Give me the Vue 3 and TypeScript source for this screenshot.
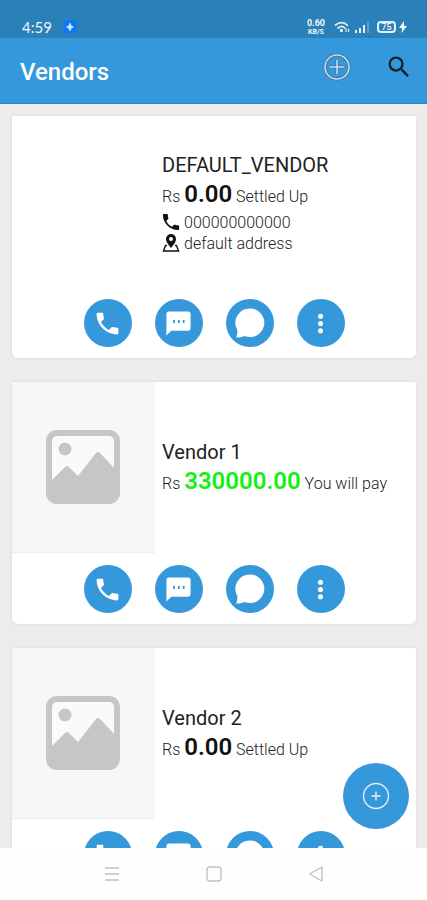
<script setup lang="ts">
interface Vendor {
  name: string
  amount: string
  status: string
  owed?: boolean
  phone?: string
  address?: string
  placeholder: boolean
}

const vendors: Vendor[] = [
  { name: 'DEFAULT_VENDOR', amount: '0.00', status: 'Settled Up', phone: '000000000000', address: 'default address', placeholder: false },
  { name: 'Vendor 1', amount: '330000.00', status: 'You will pay', owed: true, placeholder: true },
  { name: 'Vendor 2', amount: '0.00', status: 'Settled Up', placeholder: true },
]

const callPath =
  'M20 15.5c-1.25 0-2.45-.2-3.57-.57-.35-.11-.74-.03-1.02.24l-2.2 2.2c-2.83-1.44-5.15-3.75-6.59-6.59l2.2-2.21c.28-.26.36-.65.25-1C8.7 6.45 8.5 5.25 8.5 4c0-.55-.45-1-1-1H4c-.55 0-1 .45-1 1 0 9.39 7.61 17 17 17 .55 0 1-.45 1-1v-3.5c0-.55-.45-1-1-1z'
</script>

<template>
  <div class="screen">
    <div class="status">
      <span class="clock">4:59</span>
      <svg class="badge" viewBox="0 0 14 14" aria-hidden="true">
        <rect x="0.5" y="0.5" width="13" height="13" rx="3.5" fill="#0a78fb" />
        <path d="M7 3.5 10.500 7 7 10.500 3.500 7z" fill="#8fc4ff" />
        <path d="M7 3.500v7M4 7h6" stroke="#e6f3ff" stroke-width="1.2" stroke-linecap="round" />
      </svg>
      <div class="speed"><span>0.60</span><span class="unit">KB/S</span></div>
      <svg class="wifi" viewBox="0 0 16 14" fill="none" stroke="#e4f0f9" stroke-width="1.7" stroke-linecap="round" aria-hidden="true">
        <path d="M1.5 5.2C5 1.8 10 1.8 13.2 5.2M4 8c2.2-2 4.8-2 6.8 0" />
        <circle cx="7.4" cy="10.5" r="0.8" fill="#e4f0f9" />
        <path d="M12 8.500v3M14.500 9v2.500" stroke-width="1.2" />
      </svg>
      <svg class="signal" viewBox="0 0 16 14" aria-hidden="true">
        <path d="M1 10h2v3H1zM5 8h2v5H5zM9 5h2v8H9z" fill="#e4f0f9" />
        <path d="M13 1h2v12h-2z" fill="#5c9fcb" />
      </svg>
      <div class="battery">75</div>
      <svg class="bolt" viewBox="0 0 8 12" aria-hidden="true"><path d="M5 0 0 7h3L2.500 12 8 5H5z" fill="#f2f8fc" /></svg>
    </div>

    <header class="appbar">
      <h1>Vendors</h1>
      <button class="tool" type="button" aria-label="Add vendor">
        <svg width="28" height="28" viewBox="0 0 28 28" fill="none" aria-hidden="true">
          <g stroke="#456c89" stroke-width="2.8"><circle cx="14" cy="14" r="12" /><path d="M14 7v14M7 14h14" /></g>
          <g stroke="#c6dff2" stroke-width="1.6"><circle cx="14" cy="14" r="12" /><path d="M14 7v14M7 14h14" /></g>
        </svg>
      </button>
      <button class="tool" type="button" aria-label="Search">
        <svg width="28" height="28" viewBox="0 0 24 24" fill="#10202c" aria-hidden="true">
          <path d="M15.5 14h-.79l-.28-.27A6.471 6.471 0 0 0 16 9.5 6.5 6.5 0 1 0 9.5 16c1.61 0 3.09-.59 4.23-1.57l.27.28v.79l5 4.99L20.49 19l-4.99-5zm-6 0C7.01 14 5 11.99 5 9.5S7.01 5 9.5 5 14 7.01 14 9.5 11.99 14 9.5 14z" />
        </svg>
      </button>
    </header>

    <main class="content">
      <article v-for="vendor in vendors" :key="vendor.name" class="card">
        <div class="body">
          <div class="photo" :class="{ empty: vendor.placeholder }">
            <svg v-if="vendor.placeholder" width="74" height="74" viewBox="0 0 74 74" aria-hidden="true">
              <rect x="3" y="3" width="68" height="68" rx="8" fill="#fafafa" stroke="#c6c6c6" stroke-width="6" />
              <circle cx="19" cy="19" r="6.5" fill="#c6c6c6" />
              <path d="M4 52 19 37q2-2 4 0l9 9 18-23q2-2 4 0l17 18v23q0 7-7 7H11q-7 0-7-7z" fill="#c6c6c6" />
            </svg>
          </div>
          <div class="info">
            <h2>{{ vendor.name }}</h2>
            <p class="balance">Rs <strong :class="{ owed: vendor.owed }">{{ vendor.amount }}</strong> {{ vendor.status }}</p>
            <p v-if="vendor.phone" class="detail">
              <svg viewBox="2 2 20 20" aria-hidden="true"><path :d="callPath" /></svg>{{ vendor.phone }}
            </p>
            <p v-if="vendor.address" class="detail">
              <svg viewBox="0 0 18 18" aria-hidden="true">
                <path fill-rule="evenodd" d="M9 0a5 5 0 0 0-5 5c0 3.500 5 9 5 9s5-5.500 5-9a5 5 0 0 0-5-5zm0 3a2 2 0 1 1 0 4 2 2 0 0 1 0-4z" />
                <path d="M5 11.500H3.500L1.500 17h15l-2-5.500H13" fill="none" stroke="#111" stroke-width="1.4" />
              </svg>{{ vendor.address }}
            </p>
          </div>
        </div>
        <div class="actions">
          <button type="button" aria-label="Call">
            <svg width="29" height="29" viewBox="0 0 24 24" aria-hidden="true"><path :d="callPath" /></svg>
          </button>
          <button type="button" aria-label="Message">
            <svg width="29" height="29" viewBox="0 0 24 24" aria-hidden="true">
              <path fill-rule="evenodd" d="M20 2H4c-1.100 0-2 .9-2 2v18l4-4h14c1.100 0 2-.9 2-2V4c0-1.100-.9-2-2-2zM7.500 9H9v2.500H7.500zm4 0H13v2.500h-1.500zm4 0H17v2.500h-1.500z" />
            </svg>
          </button>
          <button type="button" aria-label="Chat">
            <svg width="30" height="30" viewBox="0 0 30 30" aria-hidden="true">
              <path d="M15 0.500a14.300 14.300 0 1 1-5.500 27.500C7 29.500 4 29.500 1 29.500c1-1.500 1.500-4 1.300-7.500A14.300 14.300 0 0 1 15 0.500z" />
            </svg>
          </button>
          <button type="button" aria-label="More options">
            <svg width="29" height="29" viewBox="0 0 24 24" aria-hidden="true">
              <circle cx="12" cy="6" r="2.1" /><circle cx="12" cy="12" r="2.1" /><circle cx="12" cy="18" r="2.1" />
            </svg>
          </button>
        </div>
      </article>
      <button class="fab" type="button" aria-label="New vendor">
        <svg width="28" height="28" viewBox="0 0 28 28" fill="none" stroke="#e2f0fa" stroke-width="1.4" aria-hidden="true">
          <circle cx="14" cy="14" r="12.5" /><path d="M14 9.500v9M9.500 14h9" />
        </svg>
      </button>
    </main>

    <nav class="system">
      <button type="button" aria-label="Recent apps">
        <svg width="16" height="16" viewBox="0 0 16 16" aria-hidden="true"><path d="M1 2h14M1 8h14M1 14h14" /></svg>
      </button>
      <button type="button" aria-label="Home">
        <svg width="16" height="16" viewBox="0 0 16 16" aria-hidden="true"><rect x="1" y="1" width="14" height="14" rx="3" /></svg>
      </button>
      <button type="button" aria-label="Back">
        <svg width="16" height="16" viewBox="0 0 16 16" aria-hidden="true"><path d="M14 1v14L1.500 8z" stroke-linejoin="round" /></svg>
      </button>
    </nav>
  </div>
</template>

<style>
body {
  margin: 0;
}
</style>

<style scoped>
.screen {
  display: flex;
  flex-direction: column;
  height: 100vh;
  overflow: hidden;
  font-family: Roboto, "Liberation Sans", sans-serif;
  background: #ececec;
}

h1,
h2,
p {
  margin: 0;
  font-weight: 400;
}

button {
  display: flex;
  align-items: center;
  justify-content: center;
  border: 0;
  padding: 0;
  background: none;
}

.status {
  display: flex;
  flex: none;
  align-items: center;
  height: 22px;
  padding: 16px 20px 0 22px;
  color: #f0f7fc;
  background: #2a80b9;
}

.clock {
  font-family: Lato, Roboto, sans-serif;
  font-size: 15px;
  line-height: 22px;
}

.badge {
  width: 14px;
  height: 14px;
  margin-left: 11px;
}

.speed {
  display: flex;
  flex-direction: column;
  align-items: center;
  margin-left: auto;
  font-size: 9px;
  font-weight: 700;
  line-height: 10px;
}

.unit {
  font-size: 7px;
  line-height: 8px;
}

.wifi {
  width: 16px;
  height: 14px;
  margin-left: 9px;
}

.signal {
  width: 16px;
  height: 14px;
  margin-left: 4px;
}

.battery {
  width: 15px;
  height: 8px;
  margin-left: 7px;
  border: 2px solid #e4f0f9;
  border-radius: 4px;
  font-size: 9px;
  font-weight: 500;
  line-height: 8px;
  text-align: center;
}

.bolt {
  width: 8px;
  height: 12px;
  margin-left: 3px;
}

.appbar {
  display: flex;
  flex: none;
  align-items: center;
  gap: 34px;
  height: 66px;
  padding: 2px 14px 0 20px;
  box-sizing: border-box;
  border-bottom: 1px solid #2388c9;
  background: #3498db;
}

.appbar h1 {
  flex: 1;
  color: #fff;
  font-size: 24px;
  font-weight: 500;
  line-height: 32px;
}

.tool {
  padding-bottom: 10px;
}

.content {
  position: relative;
  display: flex;
  flex: 1;
  flex-direction: column;
  gap: 24px;
  min-height: 0;
  padding: 12px 11px 0 12px;
  overflow: hidden;
}

.card {
  flex: none;
  border-radius: 2px 2px 6px 6px;
  background: #fff;
  box-shadow: 0 0 3px rgba(0, 0, 0, 0.1);
}

.body {
  display: flex;
  gap: 8px;
  min-height: 170px;
}

.photo {
  display: flex;
  flex: none;
  align-items: center;
  justify-content: center;
  width: 142px;
}

.photo.empty {
  background: #f6f6f6;
  box-shadow: 0 1px 1px #eee;
}

.info {
  display: flex;
  flex: 1;
  flex-direction: column;
  justify-content: center;
  padding-top: 2px;
}

.info h2 {
  color: #222;
  font-size: 20px;
  line-height: 28px;
}

.balance {
  color: #222;
  font-size: 16px;
  font-weight: 300;
  line-height: 30px;
}

.balance strong {
  color: #111;
  font-size: 24px;
  font-weight: 600;
}

.balance .owed {
  color: #14f014;
}

.detail {
  display: flex;
  align-items: center;
  gap: 4px;
  color: #222;
  font-size: 16px;
  font-weight: 300;
  line-height: 21px;
}

.detail svg {
  width: 18px;
  height: 18px;
  fill: #111;
}

.actions {
  display: flex;
  justify-content: center;
  gap: 23px;
  padding: 13px 0 11px;
}

.actions button {
  width: 48px;
  height: 48px;
  border-radius: 50%;
  background: #3498db;
}

.actions svg {
  fill: #fff;
}

.fab {
  position: absolute;
  right: 18px;
  bottom: 19px;
  width: 66px;
  height: 66px;
  border-radius: 50%;
  background: #3498db;
}

.system {
  display: flex;
  flex: none;
  align-items: center;
  justify-content: center;
  gap: 86px;
  height: 52px;
  background: #fefefe;
}

.system svg {
  fill: none;
  stroke: #c2c2c2;
  stroke-width: 1.4;
}
</style>
